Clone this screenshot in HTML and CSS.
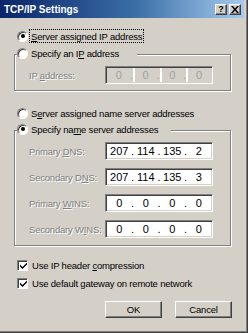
FILE: index.html
```html
<!DOCTYPE html>
<html lang="en">
<head>
    <meta charset="UTF-8">
    <meta name="viewport" content="width=device-width, initial-scale=1.0">
    <title>TCP/IP Settings</title>
    <link rel="stylesheet" href="styles.css">
</head>
<body>

<div class="window">
    <div class="titlebar">
        <span class="title">TCP/IP Settings</span>
        <span class="tbtn help">?</span>
        <span class="tbtn close">
            <svg width="8" height="7" viewBox="0 0 8 7"><path d="M0 0h2l2 2.5 2-2.5h2l-3 3.5 3 3.5h-2l-2-2.5-2 2.5h-2l3-3.5z" fill="#000"/></svg>
        </span>
    </div>

    <div class="content">
        <!-- IP address -->
        <div class="opt first">
            <span class="radio on"></span>
            <span class="focus"><u>S</u>erver assigned IP address</span>
        </div>

        <div class="group g1">
            <div class="legend l1">
                <span class="radio"></span>
                <span>Specify an I<u>P</u> address</span>
            </div>
            <div class="row">
                <span class="lbl">IP <u>a</u>ddress:</span>
                <div class="ip off">
                    <span class="seg">0</span><span class="dot">.</span>
                    <span class="seg">0</span><span class="dot">.</span>
                    <span class="seg">0</span><span class="dot">.</span>
                    <span class="seg">0</span>
                </div>
            </div>
        </div>

        <!-- Name servers -->
        <div class="opt second">
            <span class="radio"></span>
            <span>S<u>e</u>rver assigned name server addresses</span>
        </div>

        <div class="group g2">
            <div class="legend l2">
                <span class="radio on"></span>
                <span>Specify na<u>m</u>e server addresses</span>
            </div>
            <div class="row">
                <span class="lbl">Primary <u>D</u>NS:</span>
                <div class="ip">
                    <span class="seg">207</span><span class="dot">.</span>
                    <span class="seg">114</span><span class="dot">.</span>
                    <span class="seg">135</span><span class="dot">.</span>
                    <span class="seg">2</span>
                </div>
            </div>
            <div class="row">
                <span class="lbl">Secondary D<u>N</u>S:</span>
                <div class="ip">
                    <span class="seg">207</span><span class="dot">.</span>
                    <span class="seg">114</span><span class="dot">.</span>
                    <span class="seg">135</span><span class="dot">.</span>
                    <span class="seg">3</span>
                </div>
            </div>
            <div class="row">
                <span class="lbl">Primary <u>W</u>INS:</span>
                <div class="ip">
                    <span class="seg">0</span><span class="dot">.</span>
                    <span class="seg">0</span><span class="dot">.</span>
                    <span class="seg">0</span><span class="dot">.</span>
                    <span class="seg">0</span>
                </div>
            </div>
            <div class="row">
                <span class="lbl">Secondary W<u>I</u>NS:</span>
                <div class="ip">
                    <span class="seg">0</span><span class="dot">.</span>
                    <span class="seg">0</span><span class="dot">.</span>
                    <span class="seg">0</span><span class="dot">.</span>
                    <span class="seg">0</span>
                </div>
            </div>
        </div>

        <!-- Options -->
        <div class="checks">
            <div class="opt">
                <span class="check"><svg width="7" height="7" viewBox="0 0 7 7"><path d="M0 2.5l2.5 2.5 4.5-4.5v2l-4.5 4.5-2.5-2.5z" fill="#000"/></svg></span>
                <span>Use IP header <u>c</u>ompression</span>
            </div>
            <div class="opt">
                <span class="check"><svg width="7" height="7" viewBox="0 0 7 7"><path d="M0 2.5l2.5 2.5 4.5-4.5v2l-4.5 4.5-2.5-2.5z" fill="#000"/></svg></span>
                <span>Use default <u>g</u>ateway on remote network</span>
            </div>
        </div>

        <div class="buttons">
            <span class="btn default">OK</span>
            <span class="btn">Cancel</span>
        </div>
    </div>
</div>

</body>
</html>
```

FILE: styles.css
```css
* {
    margin: 0;
    padding: 0;
    box-sizing: border-box;
}
body {
    font-family: "Liberation Sans", Arial, sans-serif;
    font-size: 9.5px;
    letter-spacing: -0.2px;
    color: #000;
    background: #d4d0c8;
}
.window {
    width: 248px;
    height: 333px;
    background: #d4d0c8;
    padding-right: 4px;
    box-shadow: inset -1px -1px #404040, inset -2px -2px #808080;
    overflow: hidden;
}
.titlebar {
    height: 18px;
    display: flex;
    align-items: center;
    padding: 0 3px 0 4px;
    background: linear-gradient(to right, #0a246a, #3a6ea5 55%, #a6caf0);
}
.title {
    flex: 1;
    color: #fff;
    font-weight: bold;
    font-size: 10px;
    letter-spacing: 0;
}
.tbtn {
    width: 12px;
    height: 11px;
    display: flex;
    align-items: center;
    justify-content: center;
    background: #d4d0c8;
    border: 1px solid;
    border-color: #fff #404040 #404040 #fff;
    box-shadow: inset -1px -1px #808080;
    font-weight: bold;
    font-size: 9px;
    line-height: 9px;
}
.help {
    margin-right: 2px;
}
.content {
    padding: 10px 0 0 14px;
}
.opt {
    height: 16px;
    display: flex;
    align-items: center;
    padding-left: 3px;
    white-space: nowrap;
}
.opt.second {
    margin-top: 14px;
}
.radio {
    flex: none;
    width: 11px;
    height: 11px;
    margin-right: 3px;
    border-radius: 50%;
    background: #fff;
    border: 1px solid;
    border-color: #808080 #fff #fff #808080;
    box-shadow: inset 1px 1px #404040;
    display: flex;
    align-items: center;
    justify-content: center;
}
.radio.on::after {
    content: "";
    width: 4px;
    height: 4px;
    border-radius: 50%;
    background: #000;
}
.focus {
    outline: 1px dotted #000;
    padding: 1px 1px 0;
    margin-left: -1px;
}
.group {
    width: 217px;
    margin-top: 10px;
    border: 1px solid #808080;
    box-shadow: inset 1px 1px #fff, 1px 1px #fff;
}
.g1 {
    padding-bottom: 6px;
}
.g2 {
    margin-top: 9px;
    padding-bottom: 7px;
}
.legend {
    height: 16px;
    margin: -10px 0 0 2px;
    display: flex;
    align-items: center;
    white-space: nowrap;
    background: #d4d0c8;
}
.l1 {
    width: 120px;
}
.l2 {
    width: 154px;
}
.row {
    display: flex;
    align-items: center;
    margin-top: 8px;
    padding-left: 14px;
}
.legend + .row {
    margin-top: 5px;
}
.lbl {
    width: 76px;
    white-space: nowrap;
    color: #808080;
    text-shadow: 1px 1px #fff;
}
.ip {
    width: 108px;
    height: 18px;
    display: flex;
    align-items: center;
    background: #fff;
    border: 1px solid;
    border-color: #808080 #fff #fff #808080;
    box-shadow: inset 1px 1px #404040, inset -1px -1px #d4d0c8;
    font-size: 11px;
    letter-spacing: 0;
    padding: 0 2px;
}
.seg {
    flex: 1;
    text-align: center;
}
.dot {
    width: 4px;
    text-align: center;
}
.ip.off {
    background: #d4d0c8;
    color: #a0a0a0;
}
.ip.off .dot {
    height: 14px;
    line-height: 14px;
    border-right: 2px solid #fff;
    width: 5px;
}
.checks {
    margin-top: 11px;
}
.checks .opt + .opt {
    margin-top: 2px;
}
.check {
    flex: none;
    width: 11px;
    height: 11px;
    margin-right: 4px;
    background: #fff;
    border: 1px solid;
    border-color: #808080 #fff #fff #808080;
    box-shadow: inset 1px 1px #404040;
    display: flex;
    align-items: center;
    justify-content: center;
    padding: 1px 0 0 1px;
}
.buttons {
    display: flex;
    gap: 13px;
    margin: 10px 0 0 91px;
}
.btn {
    width: 57px;
    height: 17px;
    display: flex;
    align-items: center;
    justify-content: center;
    border: 1px solid;
    border-color: #fff #404040 #404040 #fff;
    box-shadow: inset -1px -1px #808080;
}
```
